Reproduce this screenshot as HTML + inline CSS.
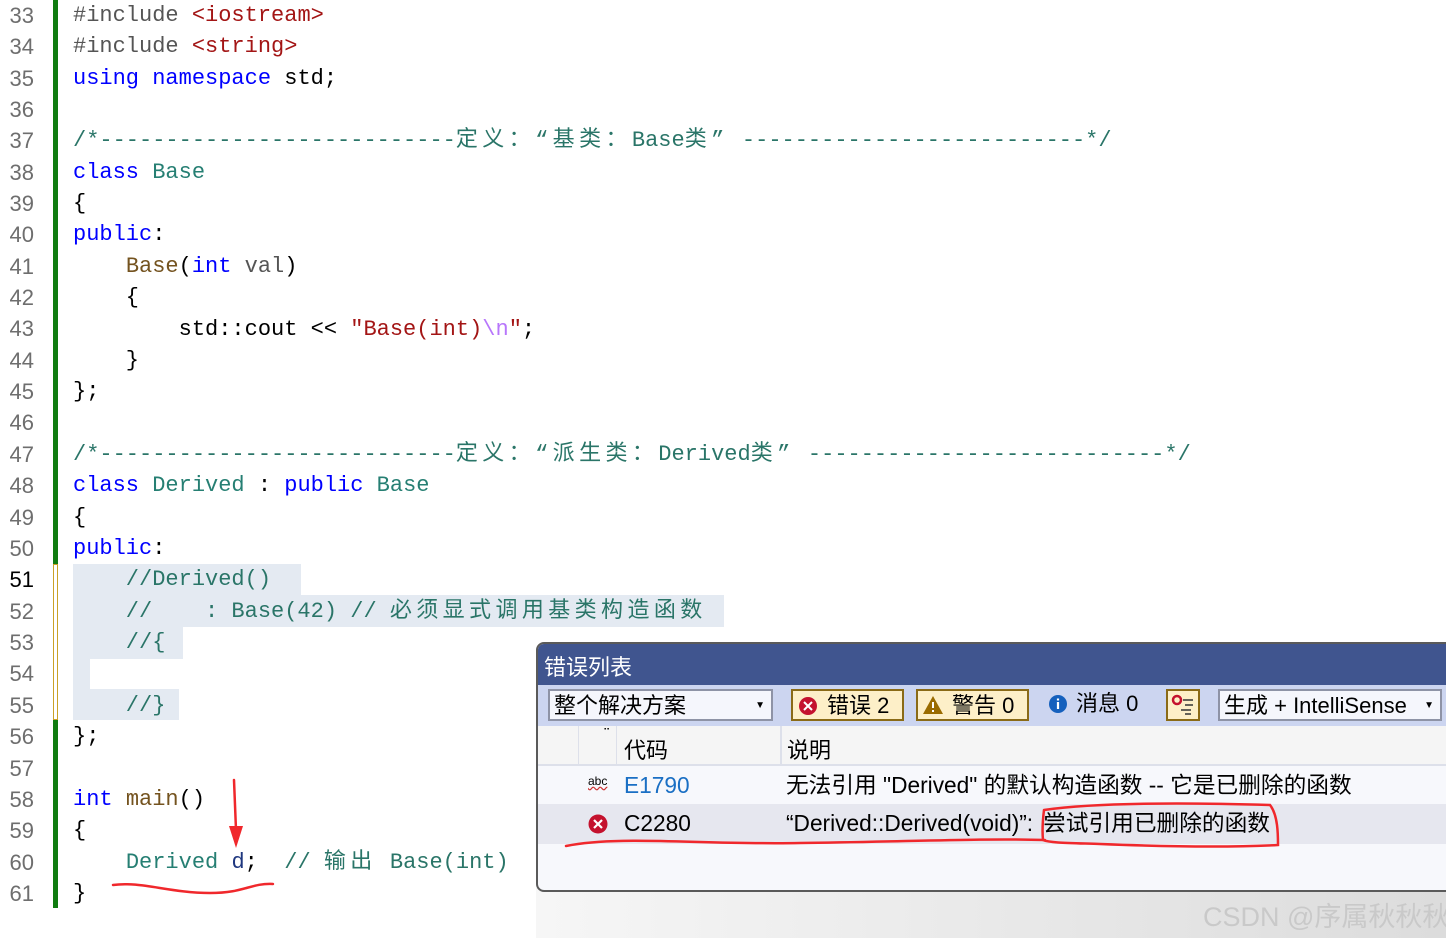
<!DOCTYPE html>
<html><head><meta charset="utf-8"><style>
*{margin:0;padding:0;box-sizing:border-box}
body{width:1446px;height:938px;overflow:hidden;background:#fff;position:relative;font-family:"Liberation Sans","Noto Sans CJK SC",sans-serif}
.ln{position:absolute;left:0;width:34px;text-align:right;font-size:22px;line-height:31px;margin-top:-3px;color:#6e6e6e;font-family:"Liberation Sans",sans-serif}
.code{position:absolute;left:73px;white-space:pre;font-family:"Liberation Mono","Noto Sans CJK SC",monospace;font-size:22px;line-height:31px;height:31px;margin-top:-2px;color:#000}
.c{letter-spacing:4.4px;line-height:31px}
.k{color:#0000ff}.t{color:#267f73}.s{color:#a31515}.f{color:#74531f}.cm{color:#2a7568}
.hl{position:absolute;background:#e4eaf2}
.panel{position:absolute;left:536px;top:642px;width:920px;height:250px;border:2px solid #5a5a5a;border-radius:8px 0 0 8px;background:#f7f8fc;overflow:hidden}
.pt{position:absolute;left:0;top:0;right:0;height:41px;background:#40558f;color:#fff;font-size:22px;padding:6px 0 0 6px}
.tb{position:absolute;left:0;top:41px;right:0;height:41px;background:#ccd5f0}
.box{position:absolute;top:4px;height:32px;font-size:22px;line-height:29px;white-space:nowrap}
.dd{background:#f5f6fc;border:2px solid #8e93a6;padding-left:4px}
.btn{background:#fdefc8;border:2px solid #8a6a16;padding-left:34px}
.hd{position:absolute;top:82px;left:0;right:0;height:40px;background:#f5f5f5;border-bottom:2px solid #dde0ea;font-size:22px}
.row{position:absolute;left:0;right:0;height:38px;font-size:22.7px;line-height:38px;white-space:nowrap}
</style></head><body>
<div style="position:absolute;left:53px;top:0;width:5px;height:908px;background:#107c10"></div>
<div style="position:absolute;left:53px;top:564px;width:5px;height:156px;background:#fff;border:1px solid #c9a227"></div>
<div class="hl" style="left:73px;top:564px;width:228px;height:31px"></div>
<div class="hl" style="left:73px;top:595px;width:651px;height:32px"></div>
<div class="hl" style="left:73px;top:627px;width:110px;height:32px"></div>
<div class="hl" style="left:73px;top:689px;width:106px;height:31px"></div>
<div class="hl" style="left:73px;top:659px;width:17px;height:30px"></div>

<div class="ln" style="top:3px">33</div><div class="code" style="top:2px"><span style="color:#555">#include</span> <span class="s">&lt;iostream&gt;</span></div>
<div class="ln" style="top:34px">34</div><div class="code" style="top:33px"><span style="color:#555">#include</span> <span class="s">&lt;string&gt;</span></div>
<div class="ln" style="top:66px">35</div><div class="code" style="top:65px"><span class="k">using namespace</span> std;</div>
<div class="ln" style="top:97px">36</div>
<div class="ln" style="top:128px">37</div><div class="code cm" style="top:127px">/*---------------------------<span class="c">定义：“基类：</span>Base<span class="c">类”</span> --------------------------*/</div>
<div class="ln" style="top:160px">38</div><div class="code" style="top:159px"><span class="k">class</span> <span class="t">Base</span></div>
<div class="ln" style="top:191px">39</div><div class="code" style="top:190px">{</div>
<div class="ln" style="top:222px">40</div><div class="code" style="top:221px"><span class="k">public</span>:</div>
<div class="ln" style="top:254px">41</div><div class="code" style="top:253px">    <span class="f">Base</span>(<span class="k">int</span> <span style="color:#555">val</span>)</div>
<div class="ln" style="top:285px">42</div><div class="code" style="top:284px">    {</div>
<div class="ln" style="top:316px">43</div><div class="code" style="top:316px">        std::cout &lt;&lt; <span class="s">"Base(int)</span><span style="color:#b776fb">\n</span><span class="s">"</span>;</div>
<div class="ln" style="top:348px">44</div><div class="code" style="top:347px">    }</div>
<div class="ln" style="top:379px">45</div><div class="code" style="top:378px">};</div>
<div class="ln" style="top:410px">46</div>
<div class="ln" style="top:442px">47</div><div class="code cm" style="top:441px">/*---------------------------<span class="c">定义：“派生类：</span>Derived<span class="c">类”</span> ---------------------------*/</div>
<div class="ln" style="top:473px">48</div><div class="code" style="top:472px"><span class="k">class</span> <span class="t">Derived</span> : <span class="k">public</span> <span class="t">Base</span></div>
<div class="ln" style="top:505px">49</div><div class="code" style="top:504px">{</div>
<div class="ln" style="top:536px">50</div><div class="code" style="top:535px"><span class="k">public</span>:</div>
<div class="ln" style="top:567px;color:#000">51</div><div class="code cm" style="top:566px">    //Derived()</div>
<div class="ln" style="top:599px">52</div><div class="code cm" style="top:598px">    //    : Base(42) // <span class="c">必须显式调用基类构造函数</span></div>
<div class="ln" style="top:630px">53</div><div class="code cm" style="top:629px">    //{</div>
<div class="ln" style="top:661px">54</div>
<div class="ln" style="top:693px">55</div><div class="code cm" style="top:692px">    //}</div>
<div class="ln" style="top:724px">56</div><div class="code" style="top:723px">};</div>
<div class="ln" style="top:756px">57</div>
<div class="ln" style="top:787px">58</div><div class="code" style="top:786px"><span class="k">int</span> <span class="f">main</span>()</div>
<div class="ln" style="top:818px">59</div><div class="code" style="top:817px">{</div>
<div class="ln" style="top:850px">60</div><div class="code" style="top:849px">    <span class="t">Derived</span> <span style="color:#1f377f">d</span>;  <span class="cm">// <span class="c">输出</span> Base(int)</span></div>
<div class="ln" style="top:881px">61</div><div class="code" style="top:880px">}</div>

<div style="position:absolute;left:536px;top:888px;width:910px;height:50px;background:linear-gradient(to right,#f6f6f6,#dcdcdc)"></div>

<div class="panel">
 <div class="pt">错误列表</div>
 <div class="tb">
  <div class="box dd" style="left:10px;width:225px">整个解决方案<span style="position:absolute;right:6px;font-size:10px">▼</span></div>
  <div class="box btn" style="left:253px;width:113px"><svg style="position:absolute;left:5px;top:5px" width="20" height="20"><circle cx="10" cy="10" r="9" fill="#c4122e"/><path d="M6 6L14 14M14 6L6 14" stroke="#fff" stroke-width="2"/></svg>错误 2</div>
  <div class="box btn" style="left:378px;width:113px"><svg style="position:absolute;left:4px;top:4px" width="22" height="20"><path d="M11 1L21 19H1Z" fill="#9a6b00"/><path d="M11 7v6M11 15v2" stroke="#fff" stroke-width="2"/></svg>警告 0</div>
  <div class="box" style="left:508px;width:100px;padding-left:30px"><svg style="position:absolute;left:2px;top:5px" width="20" height="20"><circle cx="10" cy="10" r="9" fill="#1560bd"/><path d="M10 8v7M10 4.5v2" stroke="#fff" stroke-width="2.2"/></svg>消息 0</div>
  <div class="box btn" style="left:628px;width:34px;padding:0"><svg style="position:absolute;left:3px;top:3px" width="26" height="24"><circle cx="6" cy="6" r="4" fill="none" stroke="#c4122e" stroke-width="2.5"/><path d="M12 6h10M14 11h8M10 16h10M14 20h6" stroke="#333" stroke-width="1.5"/></svg></div>
  <div class="box dd" style="left:680px;width:224px">生成 + IntelliSense<span style="position:absolute;right:6px;font-size:10px">▼</span></div>
 </div>
 <div class="hd">
  <div style="position:absolute;left:40px;top:0;height:40px;border-left:1px solid #dde0ea"></div>
  <div style="position:absolute;left:65px;top:2px;font-size:10px">⠉</div>
  <div style="position:absolute;left:78px;top:0;height:40px;border-left:1px solid #dde0ea"></div>
  <div style="position:absolute;left:86px;top:7px">代码</div>
  <div style="position:absolute;left:242px;top:0;height:40px;border-left:2px solid #dde0ea"></div>
  <div style="position:absolute;left:249px;top:7px">说明</div>
 </div>
 <div class="row" style="top:122px;background:#f7f8fc">
  <span style="position:absolute;left:50px;font-size:12px;line-height:30px;text-decoration:underline wavy #c33">abc</span>
  <span style="position:absolute;left:86px;color:#1a6fc4">E1790</span>
  <span style="position:absolute;left:248px">无法引用 "Derived" 的默认构造函数 -- 它是已删除的函数</span>
 </div>
 <div class="row" style="top:160px;background:#e6e7ef;height:40px">
  <svg style="position:absolute;left:50px;top:10px" width="20" height="20"><circle cx="10" cy="10" r="9.5" fill="#c4122e"/><path d="M6 6L14 14M14 6L6 14" stroke="#fff" stroke-width="2.2"/></svg>
  <span style="position:absolute;left:86px">C2280</span>
  <span style="position:absolute;left:248px">“Derived::Derived(void)”:<span style="margin-left:10px">尝试引用已删除的函数</span></span>
 </div>
</div>

<div style="position:absolute;left:1203px;top:895px;font-size:27px;color:#c9c9c9;white-space:nowrap">CSDN @序属秋秋秋</div>

<svg style="position:absolute;left:0;top:0" width="1446" height="938">
 <g fill="none" stroke="#f0282c" stroke-width="2.5" stroke-linecap="round">
  <path d="M113 885C140 881 170 893 210 893C245 893 250 883 273 884"/>
  <path d="M234 780L236 830"/>
  <path d="M566 846C620 835 700 845 800 843C900 842 980 838 1045 840"/>
  <path d="M1044 810C1100 802 1200 803 1270 805C1278 815 1278 835 1278 845C1220 848 1150 846 1100 844C1070 843 1050 843 1043 840C1042 830 1043 818 1044 810"/>
 </g>
 <path d="M229 826L243 826L236 848Z" fill="#f0282c"/>
</svg>
</body></html>
